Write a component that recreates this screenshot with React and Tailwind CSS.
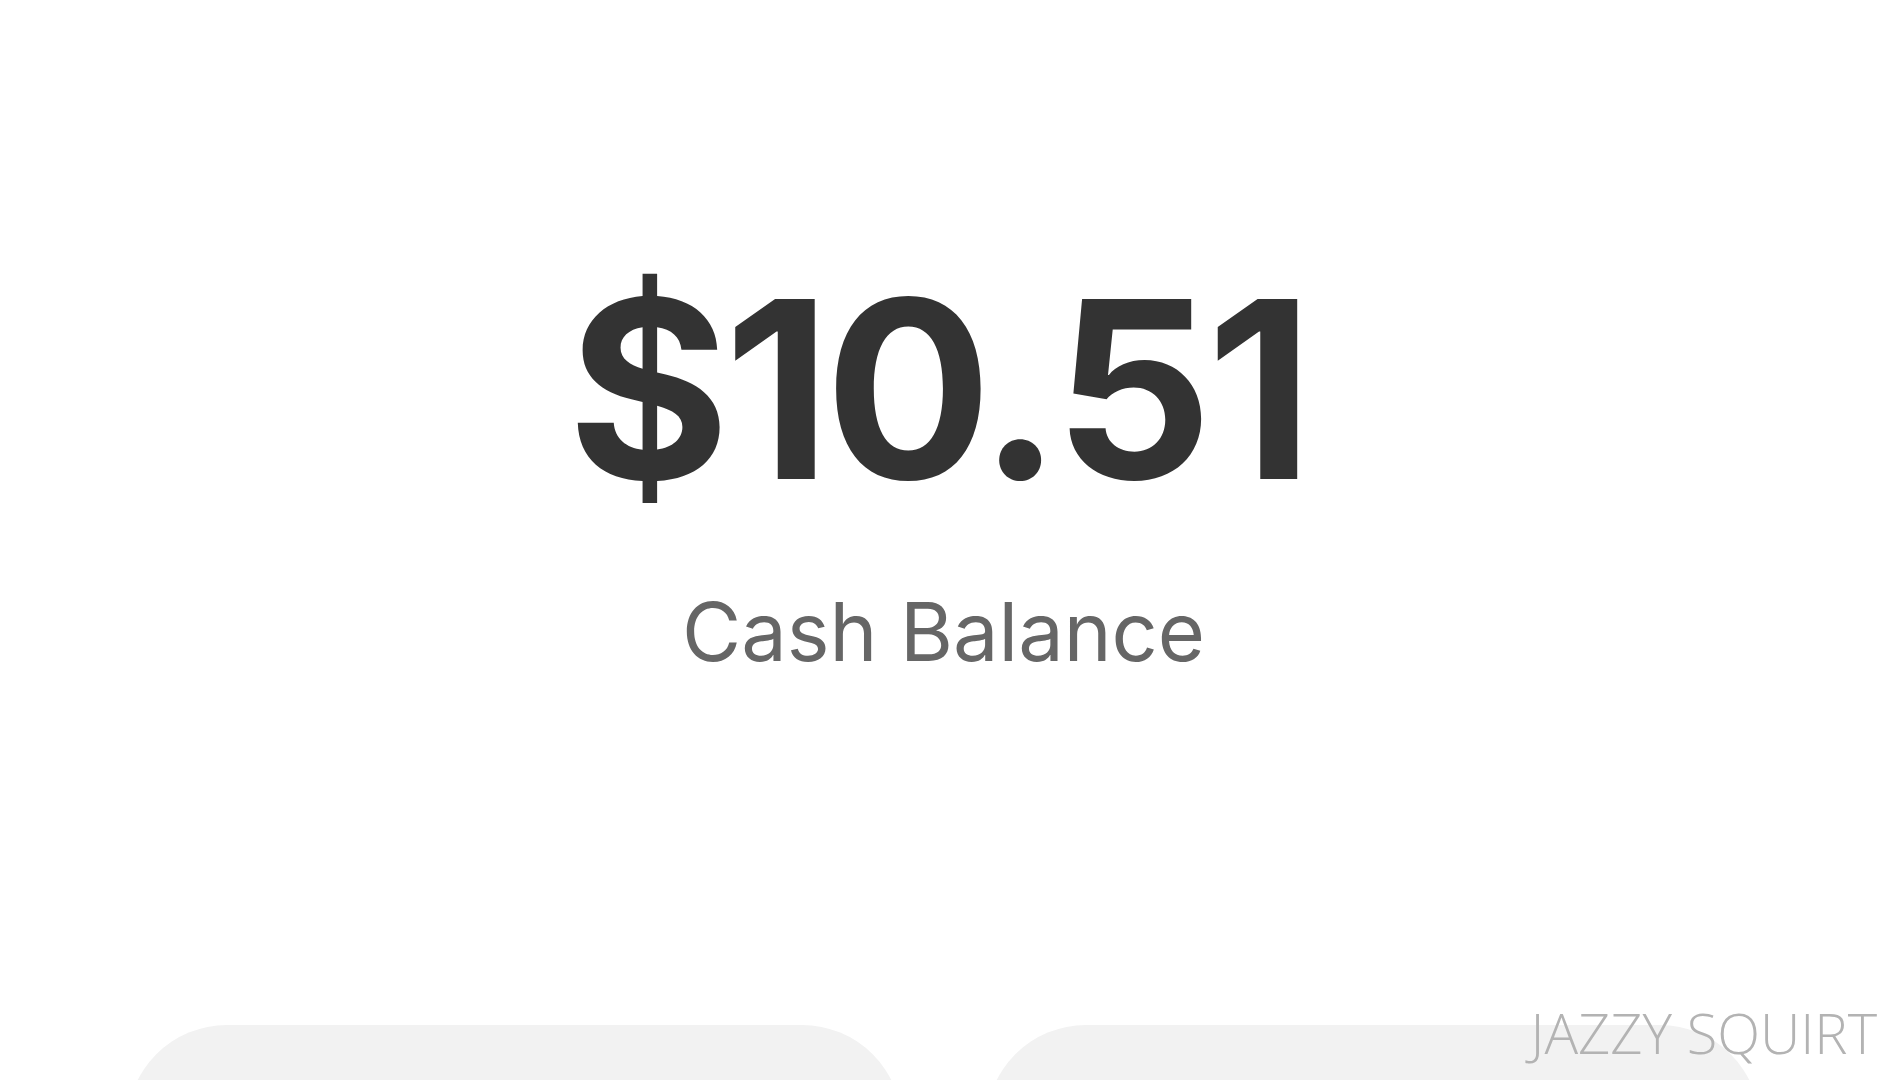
import React from 'react';

const App = () => {
  return (
    <div className="relative h-[1080px] w-full overflow-hidden bg-white">
      <div className="flex flex-col items-center pt-[265px]">
        <h1 className="pr-[12px] text-[248px] leading-none font-bold text-[#333333] tracking-[-6px] font-['Inter',sans-serif]">
          $10.51
        </h1>
        <p className="mt-[79px] text-[81px] leading-none text-[#666666] font-['Inter',sans-serif]">
          Cash Balance
        </p>
      </div>

      <div className="mt-[352px] flex gap-[84px] px-[127px]">
        <button className="h-[200px] flex-1 rounded-[100px] bg-[#f2f2f2]"></button>
        <button className="h-[200px] flex-1 rounded-[100px] bg-[#f2f2f2]"></button>
      </div>

      <span className="absolute right-[10px] top-[1004px] text-[56px] leading-none font-light text-[#b3b3b3] font-['Open_Sans',sans-serif]">
        JAZZY SQUIRT
      </span>
    </div>
  );
};

export default App;
